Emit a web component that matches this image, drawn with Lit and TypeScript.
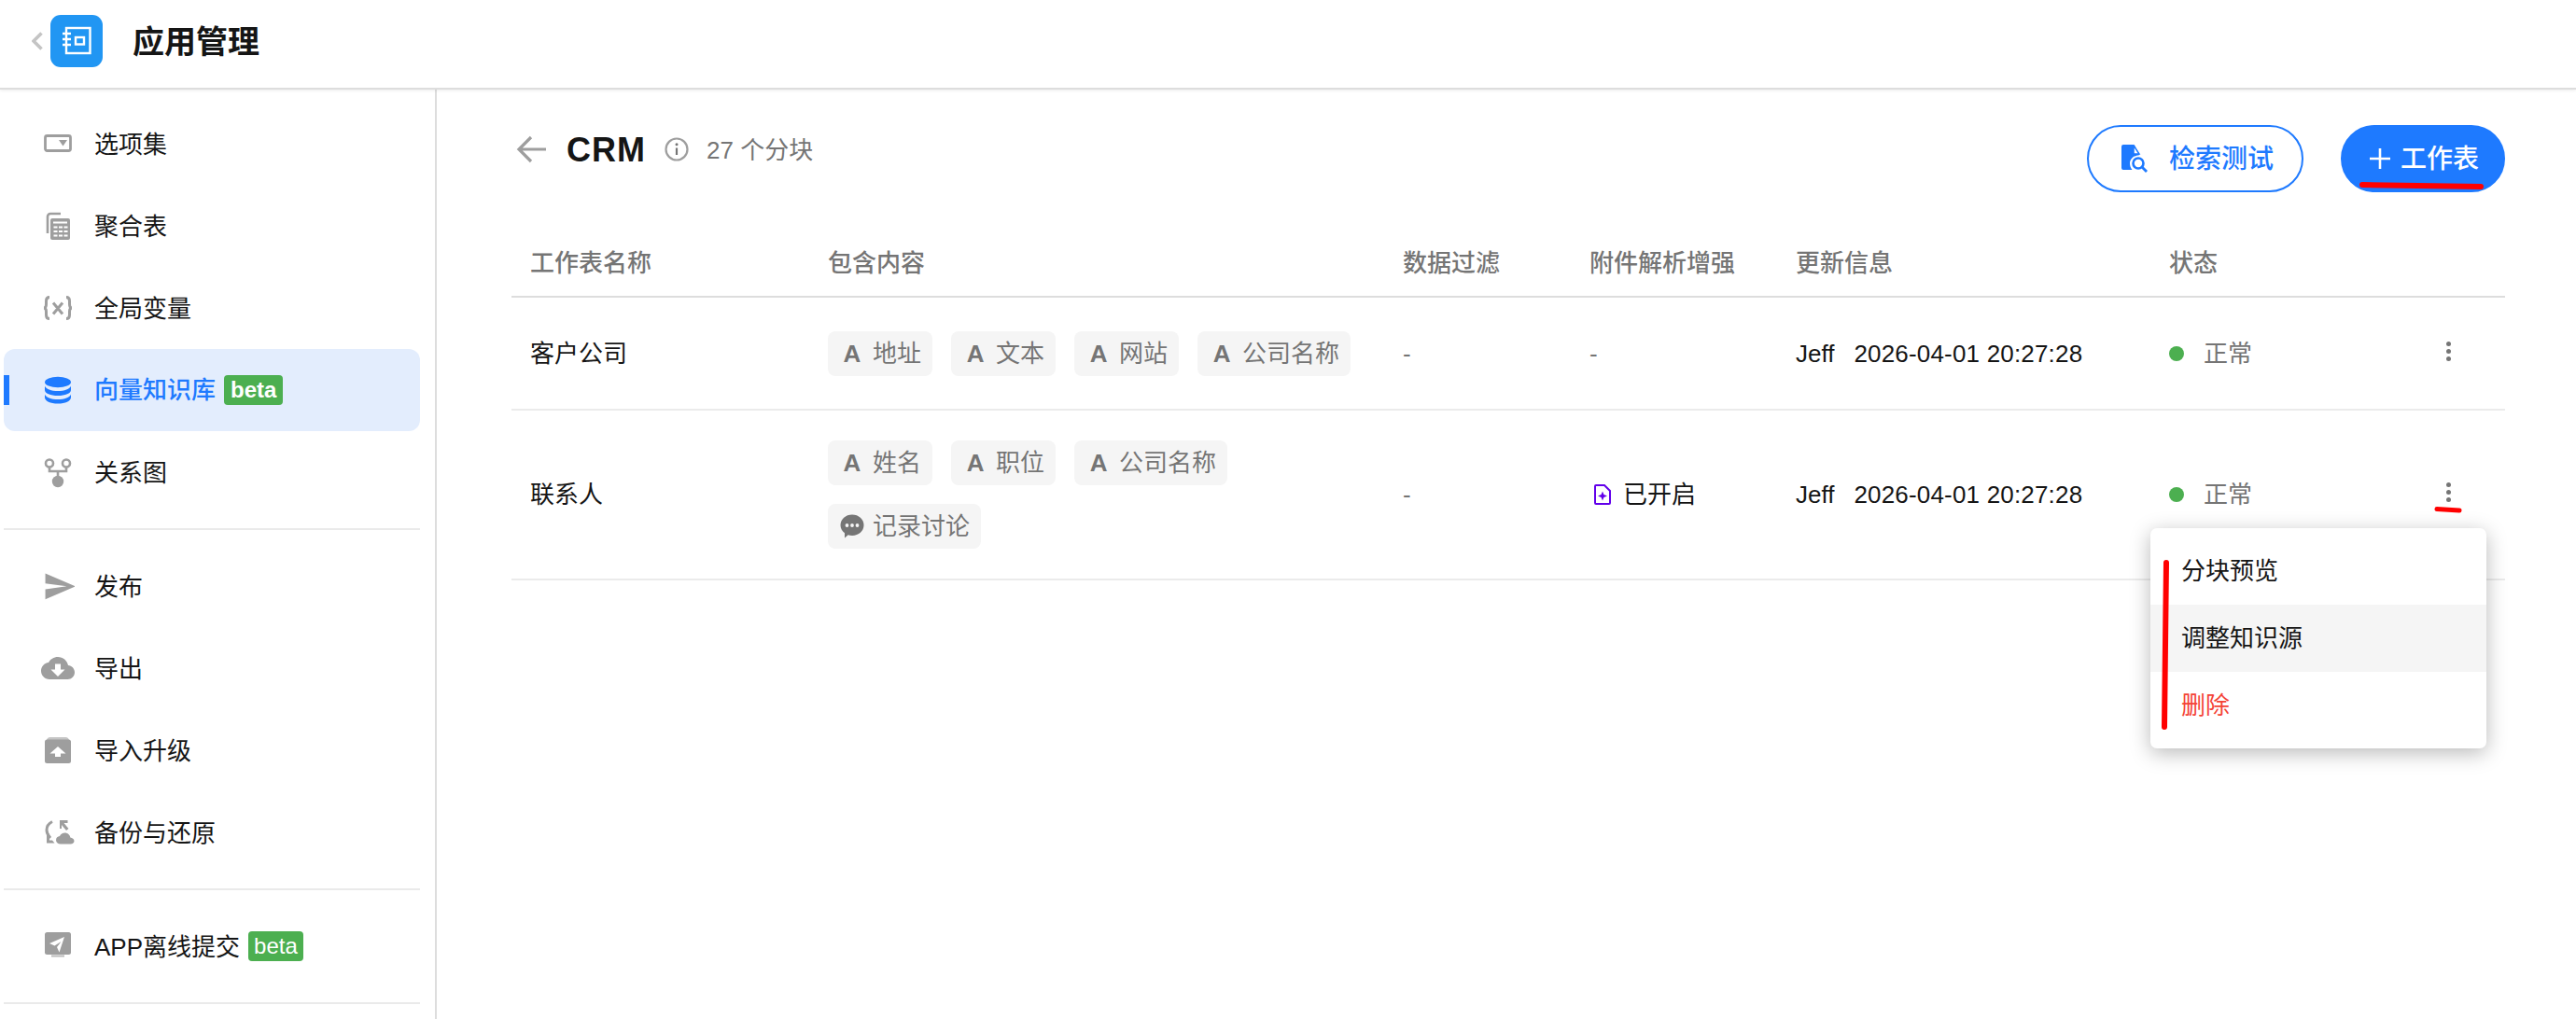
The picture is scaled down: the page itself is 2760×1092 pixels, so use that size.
import { LitElement, html, css } from "lit";
import { customElement } from "lit/decorators.js";

const G = "#9e9e9e";
const icons: Record<string, unknown> = {
  options: html`<svg width="36" height="36" viewBox="0 0 36 36"><rect x="4.500" y="9.500" width="27" height="16" rx="2" fill="none" stroke=${G} stroke-width="2.800"/><path d="M19 14h9l-4.500 6.500z" fill=${G}/></svg>`,
  agg: html`<svg width="36" height="36" viewBox="0 0 36 36"><path d="M7 26V8a3 3 0 0 1 3-3h11" fill="none" stroke=${G} stroke-width="2.600"/><path d="M12 10h17a2 2 0 0 1 2 2v19a2 2 0 0 1-2 2H12a2 2 0 0 1-2-2V12a2 2 0 0 1 2-2z" fill=${G}/><path d="M13 14.500h15M13.500 19.500h4M19 19.500h4M24.500 19.500h4M13.500 24h4M19 24h4M24.500 24h4M13.500 28.500h4M19 28.500h4M24.500 28.500h4" stroke="#fff" stroke-width="1.800"/></svg>`,
  vars: html`<svg width="36" height="36" viewBox="0 0 36 36"><path d="M9 6.500c-3 0-3.500 1.500-3.500 4v3.500c0 2.500-1 4-2.500 4 1.500 0 2.500 1.500 2.500 4v3.500c0 2.500.5 4 3.500 4M27 6.500c3 0 3.500 1.500 3.500 4v3.500c0 2.500 1 4 2.500 4-1.500 0-2.500 1.500-2.500 4v3.500c0 2.500-.5 4-3.500 4M13 12.500l10 12M23 12.500l-10 12" fill="none" stroke=${G} stroke-width="3"/></svg>`,
  db: html`<svg width="36" height="36" viewBox="0 0 36 36" fill="#1e7aff"><ellipse cx="18" cy="9.500" rx="14" ry="5.800"/><path d="M4 13.500c1 3.500 7 5.500 14 5.500s13-2 14-5.500v4.500c0 3.500-6 6-14 6S4 21.500 4 18z"/><path d="M4 22.500c1 3.500 7 5.500 14 5.500s13-2 14-5.500v3.500c0 3.800-6 6.500-14 6.500S4 29.800 4 26z"/></svg>`,
  graph: html`<svg width="36" height="36" viewBox="0 0 36 36"><circle cx="9" cy="8.500" r="4" fill="none" stroke=${G} stroke-width="2.600"/><circle cx="27" cy="8.500" r="4" fill="none" stroke=${G} stroke-width="2.600"/><path d="M9 12.500v4.500h18v-4.500M18 17v6" fill="none" stroke=${G} stroke-width="2.600"/><circle cx="18" cy="28" r="6.200" fill=${G}/></svg>`,
  send: html`<svg width="36" height="36" viewBox="0 0 24 24"><path transform="translate(1 0) scale(1.020)" d="M2 21L23 12 2 3v7l15 2-15 2z" fill=${G}/></svg>`,
  cloud: html`<svg width="36" height="36" viewBox="0 0 24 24"><path d="M19.350 10.040C18.670 6.590 15.640 4 12 4 9.110 4 6.600 5.640 5.350 8.040 2.340 8.360 0 10.910 0 14c0 3.310 2.690 6 6 6h13c2.760 0 5-2.240 5-5 0-2.640-2.050-4.780-4.650-4.960zM17 13l-5 5-5-5h3V9h4v4h3z" fill=${G}/></svg>`,
  upgrade: html`<svg width="36" height="36" viewBox="0 0 36 36"><path d="M6 7a4 4 0 0 1 4-3h16a4 4 0 0 1 4 3z" fill=${G} opacity=".6"/><rect x="4" y="6.500" width="28" height="25.500" rx="2.500" fill=${G}/><path d="M18 14l8.500 7.500H21v3.500h-6v-3.500H9.500z" fill="#fff"/></svg>`,
  backup: html`<svg width="36" height="36" viewBox="0 0 36 36"><path d="M12 6.500c-4 2-6 5-6 9s2 6.500 4 8.500" fill="none" stroke=${G} stroke-width="3"/><path d="M6 18.500v11h8.500l-2.500-3h-3v-7z" fill=${G}/><path d="M20 5h8.500v3h-4l5 6-2.500 2-5-6v4h-2z" fill=${G}/><path d="M21 30.500c-3 0-5-1.800-5-4.200 0-2.300 1.800-4 4-4.200 1-2.300 3-3.600 5.500-3.600 3 0 5.500 2.300 5.800 5 2.200.3 4.200 1.500 4.200 3.700 0 1.800-1.500 3.300-4 3.300z" fill=${G}/></svg>`,
  offline: html`<svg width="36" height="36" viewBox="0 0 36 36"><rect x="4" y="3" width="28" height="24" rx="2.500" fill=${G}/><path d="M11 28.500h14" stroke=${G} stroke-width="2" opacity=".7"/><path d="M25 8L9 15l5.500 2.500 7-4.500-4.500 6 2.500 5.500z" fill="#fff"/></svg>`,
};

const menuTop = [
  { i: "options", t: "选项集" },
  { i: "agg", t: "聚合表" },
  { i: "vars", t: "全局变量" },
  { i: "db", t: "向量知识库", active: true, beta: "bold" },
  { i: "graph", t: "关系图" },
];
const menuMid = [
  { i: "send", t: "发布" },
  { i: "cloud", t: "导出" },
  { i: "upgrade", t: "导入升级" },
  { i: "backup", t: "备份与还原" },
];
const menuBot = [{ i: "offline", t: "APP离线提交", beta: "thin" }];

const bubble = html`<svg width="26" height="26" viewBox="0 0 26 26"><path d="M13 .500c7 0 12.500 4.900 12.500 11.300S20 23 13 23c-1.600 0-3-.2-4.300-.7L5 25.500v-5.200C2.200 18.200.500 15.200.500 11.800.500 5.400 6 .500 13 .500z" fill="#757575"/><circle cx="7.500" cy="12" r="1.900" fill="#f5f5f5"/><circle cx="13" cy="12" r="1.900" fill="#f5f5f5"/><circle cx="18.500" cy="12" r="1.900" fill="#f5f5f5"/></svg>`;

@customElement("app-root")
export class AppRoot extends LitElement {
  static styles = css`
    :host {
      display: block;
      height: 100vh;
      overflow: hidden;
      position: relative;
      background: #fff;
      color: #151515;
      font-family: "Liberation Sans", "Noto Sans CJK SC", sans-serif;
      font-size: 26px;
      line-height: 36px;
    }
    * { box-sizing: border-box; }
    .top {
      height: 96px;
      border-bottom: 2px solid #ddd;
      box-shadow: 0 1px 3px rgba(0,0,0,.08);
      display: flex;
      align-items: center;
      padding: 0 0 6px 34px;
      position: relative;
      z-index: 1;
    }
    .chev { width: 12px; height: 20px; margin-right: 8px; display: block; }
    .logo {
      width: 56px; height: 56px; border-radius: 11px; background: #2196f3;
      display: flex; align-items: center; justify-content: center;
    }
    .title { margin-left: 32px; font-size: 34px; font-weight: 600; line-height: 40px; margin-top: 1px; }
    .body { display: flex; height: 996px; }
    .side {
      width: 468px; flex: none; border-right: 2px solid #ddd;
      padding: 14px 16px 0 4px;
    }
    .item {
      height: 88px; display: flex; align-items: center; padding-left: 40px;
      border-radius: 12px; position: relative;
    }
    .item svg { flex: none; display: block; margin-right: 21px; }
    .item .label { margin-top: 2px; }
    .item.active { background: #e3edfd; color: #1e7aff; }
    .item.active::before {
      content: ""; position: absolute; left: 0; top: 28px; width: 6px; height: 32px; background: #1e7aff;
    }
    .item.active .label { font-weight: 500; margin-top: 0; }
    .beta {
      margin-left: 9px; height: 32px; line-height: 32px; padding: 0 6px; border-radius: 4px;
      background: #4caf50; color: #fff; font-size: 24px;
    }
    .beta.bold { font-weight: 700; padding: 0 7px; }
    .sep { height: 2px; background: #eaeaea; margin: 16px 0; }
    .main { flex: 1; padding: 38px 76px 0 80px; min-width: 0; }
    .bar { display: flex; justify-content: space-between; align-items: flex-start; }
    .head { display: flex; align-items: center; height: 52px; padding-left: 5px; }
    .head .back { display: block; margin-right: 20px; }
    .crm { font-size: 36px; font-weight: 700; line-height: 52px; letter-spacing: 1px; margin-top: 2px; }
    .head .info { display: block; margin: 0 19px 0 20px; }
    .count { color: #757575; line-height: 52px; margin-top: 2px; }
    .btns { display: flex; gap: 40px; }
    .btn {
      height: 72px; border-radius: 36px; border: 2px solid #1e7aff; color: #1e7aff;
      display: flex; align-items: center; font-weight: 500; font-size: 28px;
    }
    .btn span { margin-top: 2px; }
    .btn.line { width: 232px; padding-left: 35px; gap: 23px; }
    .btn.fill { width: 176px; padding-left: 29px; gap: 11px; background: #1e7aff; color: #fff; }
    .btn svg { display: block; flex: none; }
    .thead, .row {
      display: grid;
      grid-template-columns: 319px 616px 200px 221px 400px 380px;
    }
    .thead {
      margin-top: 40px; height: 73px; border-bottom: 2px solid #ddd; color: #757575; font-weight: 500; align-items: center;
    }
    .cell { padding-left: 20px; min-width: 0; }
    .row { border-bottom: 2px solid #ebebeb; align-items: center; min-height: 121px; padding: 32px 0; position: relative; }
    .tags { display: flex; flex-wrap: wrap; gap: 20px; }
    .tag {
      height: 48px; border-radius: 8px; background: #f5f5f5; color: #757575;
      display: flex; align-items: center; padding: 0 12px; gap: 8px;
    }
    .glyph { width: 28px; display: flex; justify-content: center; font-weight: 700; }
    .glyph svg { display: block; }
    .dash { color: #757575; }
    .on { display: flex; align-items: center; gap: 13px; padding-left: 25px; }
    .on svg { display: block; }
    .upd { display: flex; gap: 21px; }
    .date { letter-spacing: .18px; }
    .stat { display: flex; align-items: center; color: #757575; position: relative; }
    .dot { width: 16px; height: 16px; border-radius: 50%; background: #4caf50; margin-right: 21px; }
    .more {
      margin-left: auto; margin-right: 58px; margin-bottom: 5px;
      display: flex; flex-direction: column; gap: 3px;
    }
    .more i { width: 5px; height: 5px; border-radius: 50%; background: #757575; display: block; }
    .menu {
      position: absolute; left: 1756px; top: 126px; width: 360px; padding: 10px 0;
      background: #fff; border-radius: 7px; box-shadow: 0 5px 22px rgba(0,0,0,.28); z-index: 2;
    }
    .mi { height: 72px; display: flex; align-items: center; padding-left: 33px; }
    .mi.hover { background: #f5f5f5; }
    .mi.danger { color: #f44336; }
    .marks { position: absolute; left: 0; top: 0; z-index: 3; pointer-events: none; }
  `;

  private nav(list: any[]) {
    return list.map(
      (m) => html`<div class="item ${m.active ? "active" : ""}">
        ${icons[m.i]}<span class="label">${m.t}</span>
        ${m.beta ? html`<span class="beta ${m.beta}">beta</span>` : ""}
      </div>`
    );
  }

  private tag(t: string, chat = false) {
    return html`<span class="tag"><span class="glyph">${chat ? bubble : "A"}</span>${t}</span>`;
  }

  private status() {
    return html`<div class="cell stat"><span class="dot"></span>正常<span class="more"><i></i><i></i><i></i></span></div>`;
  }

  render() {
    return html`
      <div class="top">
        <svg class="chev" viewBox="0 0 12 20"><path d="M10.500 1.500L2 10l8.500 8.500" fill="none" stroke="#c4c4c4" stroke-width="3.600"/></svg>
        <div class="logo">
          <svg width="32" height="32" viewBox="0 0 32 32"><rect x="5" y="2" width="25.500" height="27" fill="none" stroke="#fff" stroke-width="2.400"/><rect x="15" y="12" width="9" height="7.500" fill="none" stroke="#fff" stroke-width="2.400"/><path d="M1 8h9M1 14h9M1 20h9" stroke="#fff" stroke-width="2.400"/></svg>
        </div>
        <div class="title">应用管理</div>
      </div>
      <div class="body">
        <aside class="side">
          ${this.nav(menuTop)}
          <div class="sep"></div>
          ${this.nav(menuMid)}
          <div class="sep"></div>
          ${this.nav(menuBot)}
          <div class="sep"></div>
        </aside>
        <main class="main">
          <div class="bar">
            <div class="head">
              <svg class="back" width="34" height="30" viewBox="0 0 34 30"><path d="M32 15H4M16 2L3 15l13 13" fill="none" stroke="#9e9e9e" stroke-width="3.200"/></svg>
              <span class="crm">CRM</span>
              <svg class="info" width="26" height="26" viewBox="0 0 26 26"><circle cx="13" cy="13" r="11.500" fill="none" stroke="#9e9e9e" stroke-width="2.200"/><path d="M13 11.500v7.500" stroke="#757575" stroke-width="2.200"/><circle cx="13" cy="7.800" r="1.500" fill="#757575"/></svg>
              <span class="count">27 个分块</span>
            </div>
            <div class="btns">
              <div class="btn line">
                <svg width="28" height="30" viewBox="0 0 28 30"><path d="M0 2a2 2 0 0 1 2-2h10l2 .5 5 9.500-.5 1.500c-5.500 0-9.500 4-9.500 8.500 0 3 1 5 2.500 7H2a2 2 0 0 1-2-2z" fill="#1e7aff"/><path d="M13 1l6 9h-6z" fill="#fff" stroke="#1e7aff" stroke-width="1.500"/><circle cx="18" cy="20" r="5.500" fill="none" stroke="#1e7aff" stroke-width="2.600"/><path d="M22 24l5 5" stroke="#1e7aff" stroke-width="2.800"/></svg>
                <span>检索测试</span>
              </div>
              <div class="btn fill">
                <svg width="22" height="22" viewBox="0 0 22 22"><path d="M11 0v22M0 11h22" stroke="#fff" stroke-width="2.600"/></svg>
                <span>工作表</span>
              </div>
            </div>
          </div>
          <div class="thead">
            <div class="cell">工作表名称</div><div class="cell">包含内容</div><div class="cell">数据过滤</div>
            <div class="cell">附件解析增强</div><div class="cell">更新信息</div><div class="cell">状态</div>
          </div>
          <div class="row">
            <div class="cell">客户公司</div>
            <div class="cell tags">${["地址", "文本", "网站", "公司名称"].map((t) => this.tag(t))}</div>
            <div class="cell dash">-</div>
            <div class="cell dash">-</div>
            <div class="cell upd"><span>Jeff</span><span class="date">2026-04-01 20:27:28</span></div>
            ${this.status()}
          </div>
          <div class="row">
            <div class="cell">联系人</div>
            <div class="cell tags">${["姓名", "职位", "公司名称"].map((t) => this.tag(t))}${this.tag("记录讨论", true)}</div>
            <div class="cell dash">-</div>
            <div class="cell on">
              <svg width="18" height="22" viewBox="0 0 18 22"><path d="M2 1h9l6 6v13a1 1 0 0 1-1 1H2a1 1 0 0 1-1-1V2a1 1 0 0 1 1-1z" fill="none" stroke="#6200ea" stroke-width="2"/><path d="M9 7.500l1.400 3.600L14 12.500l-3.600 1.400L9 17.500l-1.400-3.600L4 12.500l3.600-1.400z" fill="#6200ea"/></svg>
              已开启
            </div>
            <div class="cell upd"><span>Jeff</span><span class="date">2026-04-01 20:27:28</span></div>
            ${this.status()}
            <div class="menu">
              <div class="mi">分块预览</div>
              <div class="mi hover">调整知识源</div>
              <div class="mi danger">删除</div>
            </div>
          </div>
        </main>
      </div>
      <svg class="marks" width="2760" height="1092" viewBox="0 0 2760 1092">
        <g fill="none" stroke="#ff0000" stroke-linecap="round">
          <path d="M2531 198L2658 200" stroke-width="6"/>
          <path d="M2611 545.500L2635 547" stroke-width="5"/>
          <path d="M2321 603L2319 779" stroke-width="6"/>
        </g>
      </svg>
    `;
  }
}
